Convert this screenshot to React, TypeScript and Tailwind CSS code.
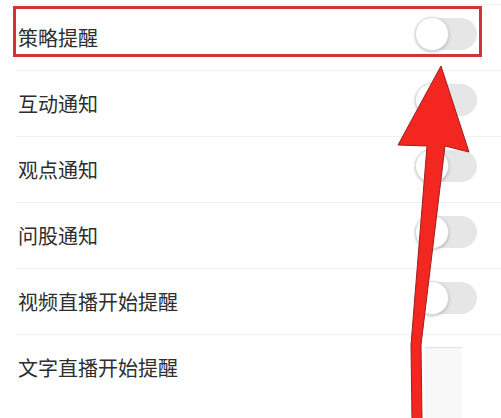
import React, { useState } from 'react';

const items = ['策略提醒', '互动通知', '观点通知', '问股通知', '视频直播开始提醒', '文字直播开始提醒'];

function Toggle({ on, onChange }: { on: boolean; onChange: () => void }) {
  return (
    <button
      onClick={onChange}
      className={`relative mb-[8px] mr-[24px] h-[32px] w-[62px] rounded-full ${on ? 'bg-[#4cd964]' : 'bg-[#e6e6e6]'}`}
    >
      <span
        className={`absolute top-[-1px] h-[34px] w-[34px] rounded-full bg-white shadow-[0_1px_3px_rgba(0,0,0,0.25)] border border-[#dcdcdc] ${on ? 'left-[28px]' : 'left-0'}`}
      />
    </button>
  );
}

export default function App() {
  const [state, setState] = useState<boolean[]>(items.map(() => false));

  return (
    <div className="relative h-[418px] w-[501px] overflow-hidden bg-white pt-[4px] font-['Noto_Sans_CJK_SC',sans-serif]">
      {items.map((label, i) => (
        <div key={label} className="relative ml-4 flex h-[66px] items-center justify-between border-t border-[#f1f1f1]">
          <span className="pl-[2px] text-[20px] text-[#2e2e2e]">{label}</span>
          {i < items.length - 1 ? (
            <Toggle on={state[i]} onChange={() => setState(s => s.map((v, j) => (j === i ? !v : v)))} />
          ) : (
            // 最后一行的开关被遮住了
            <div className="absolute left-[409px] top-[12px] h-[80px] w-[37px] border-t border-[#e2e2e2] bg-[#f8f8f8]" />
          )}
        </div>
      ))}

      {/* 红框标注 */}
      <div className="pointer-events-none absolute left-[13px] top-[6px] h-[51px] w-[469px] border-[3px] border-[#cf363c]" />

      {/* 红色箭头 */}
      <svg className="pointer-events-none absolute left-0 top-0" width="501" height="418" viewBox="0 0 501 418">
        <polygon
          points="441,66 469,152 445,146 421,345 422,420 412,420 411,345 427,146 398,145"
          fill="#f3271f"
          stroke="#9b2020"
          strokeWidth="1"
          strokeLinejoin="round"
        />
      </svg>
    </div>
  );
}
